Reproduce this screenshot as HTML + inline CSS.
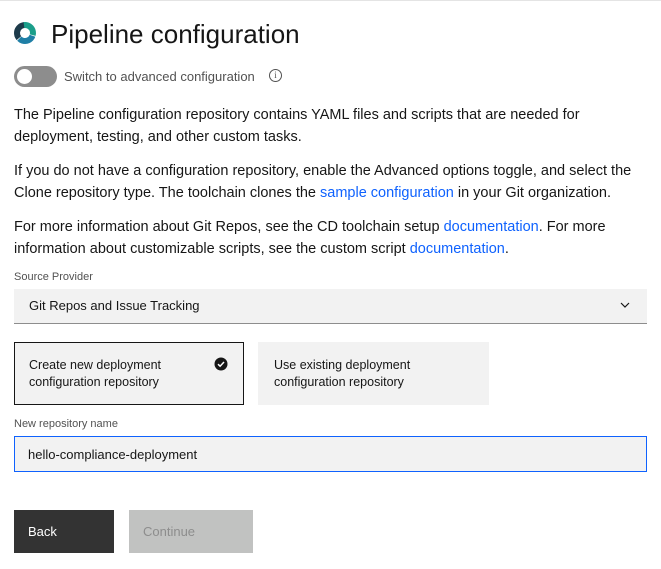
<!DOCTYPE html>
<html><head><meta charset="utf-8"><style>
*{box-sizing:border-box;margin:0;padding:0}
body{width:661px;height:569px;background:#fff;font-family:"Liberation Sans",sans-serif;color:#161616;position:relative;overflow:hidden;border-top:1px solid #e4e4e4}
.a{position:absolute}
p{position:absolute;left:14px;width:625px;font-size:14.5px;line-height:21.5px;color:#161616}
a{color:#0f62fe;text-decoration:none}
.lbl{font-size:11px;color:#525252}
</style></head><body>
<svg class="a" style="left:13px;top:20px" width="24" height="24" viewBox="0 0 24 24">
<circle cx="12" cy="12" r="8" fill="none" stroke="#1b9e8a" stroke-width="6" stroke-dasharray="16 34" transform="rotate(-100 12 12)"/>
<circle cx="12" cy="12" r="8" fill="none" stroke="#1f7fa6" stroke-width="6" stroke-dasharray="16 34" transform="rotate(20 12 12)"/>
<circle cx="12" cy="12" r="8" fill="none" stroke="#1d3a4a" stroke-width="6" stroke-dasharray="17 34" transform="rotate(140 12 12)"/>
</svg>
<div class="a" style="left:51px;top:18px;font-size:26px;color:#161616">Pipeline configuration</div>
<div class="a" style="left:14px;top:65px;width:43px;height:21px;border-radius:11px;background:#8d8d8d"></div>
<div class="a" style="left:17px;top:68px;width:15px;height:15px;border-radius:50%;background:#fff"></div>
<div class="a" style="left:64px;top:68px;font-size:13px;color:#525252">Switch to advanced configuration</div>
<div class="a" style="left:269px;top:68px;width:13px;height:13px;border:1px solid #525252;border-radius:50%;font-size:9px;text-align:center;line-height:11px;color:#525252;font-family:'Liberation Serif',serif">i</div>
<p style="top:104px">The Pipeline configuration repository contains YAML files and scripts that are needed for deployment, testing, and other custom tasks.</p>
<p style="top:160px">If you do not have a configuration repository, enable the Advanced options toggle, and select the Clone repository type. The toolchain clones the <a>sample configuration</a> in your Git organization.</p>
<p style="top:216px">For more information about Git Repos, see the CD toolchain setup <a>documentation</a>. For more information about customizable scripts, see the custom script <a>documentation</a>.</p>
<div class="a lbl" style="left:14px;top:270px">Source Provider</div>
<div class="a" style="left:14px;top:288px;width:633px;height:35px;background:#f2f2f2;border-bottom:1px solid #8d8d8d"></div>
<div class="a" style="left:29px;top:297px;font-size:13px">Git Repos and Issue Tracking</div>
<svg class="a" style="left:620px;top:300px" width="10" height="8" viewBox="0 0 10 8"><path d="M1 2L5 6L9 2" fill="none" stroke="#161616" stroke-width="1.2"/></svg>
<div class="a" style="left:14px;top:341px;width:230px;height:63px;background:#f2f2f2;border:1px solid #161616"></div>
<div class="a" style="left:29px;top:356px;font-size:12.5px;line-height:16.5px">Create new deployment<br>configuration repository</div>
<svg class="a" style="left:214px;top:356px" width="14" height="14" viewBox="0 0 14 14"><circle cx="7" cy="7" r="6.5" fill="#161616"/><path d="M4 7.2L6.1 9.2L10 5" fill="none" stroke="#fff" stroke-width="1.5"/></svg>
<div class="a" style="left:258px;top:341px;width:231px;height:63px;background:#f2f2f2"></div>
<div class="a" style="left:274px;top:356px;font-size:12.5px;line-height:16.5px">Use existing deployment<br>configuration repository</div>
<div class="a lbl" style="left:14px;top:417px">New repository name</div>
<div class="a" style="left:14px;top:435px;width:633px;height:36px;background:#f2f2f2;border:1.5px solid #0f62fe"></div>
<div class="a" style="left:28px;top:446px;font-size:13px">hello-compliance-deployment</div>
<div class="a" style="left:14px;top:509px;width:100px;height:43px;background:#333"></div>
<div class="a" style="left:28px;top:523px;font-size:13px;color:#fff">Back</div>
<div class="a" style="left:129px;top:509px;width:124px;height:43px;background:#c1c2c1"></div>
<div class="a" style="left:143px;top:523px;font-size:13px;color:#8d8d8d">Continue</div>
</body></html>
